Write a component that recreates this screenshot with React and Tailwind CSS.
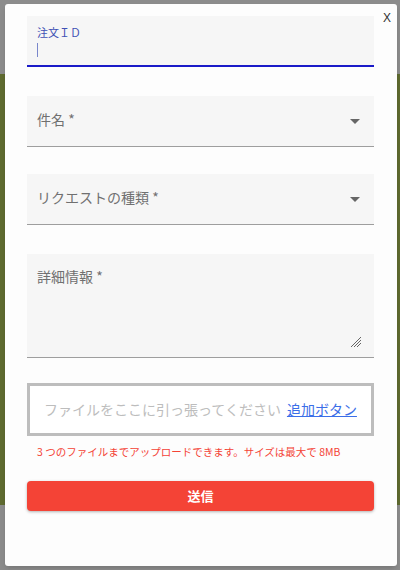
import React from 'react';

const font = { fontFamily: '"Noto Sans CJK JP", "Noto Sans", sans-serif' };

function Arrow() {
  return (
    <svg width="10" height="5" viewBox="0 0 10 5" className="shrink-0">
      <polygon points="0,0 10,0 5,5" fill="#666" />
    </svg>
  );
}

function SelectField({ label }) {
  return (
    <div className="h-[51px] bg-[#f6f6f6] border-b border-[#9e9e9e] pl-[10px] pr-[14px] flex items-center justify-between">
      <span className="text-[14px] text-[#707070] pb-[3px]">{label}</span>
      <Arrow />
    </div>
  );
}

export default function App() {
  return (
    <div className="relative w-[400px] h-[570px] bg-[#8c8c8c] overflow-hidden" style={font}>
      {/* page behind the overlay */}
      <div className="mt-[74px] h-[431px] bg-[#5f6b30]" />

      {/* modal */}
      <div className="absolute left-[5px] top-[4px] w-[392px] h-[562px] bg-[#fdfdfd] rounded-[3px] shadow-md pl-[22px] pr-[23px] pt-[12px]">
        <button className="absolute right-[6px] top-[5px] text-[12px] text-[#333]" style={{ fontFamily: '"Liberation Sans", sans-serif' }}>
          X
        </button>

        <div className="flex flex-col">
          {/* order id (focused) */}
          <div className="h-[51px] bg-[#f6f6f6] border-b-2 border-[#1a1ac8] pl-[10px] pt-[9px] flex flex-col">
            <span className="text-[11px] leading-[14px] text-[#3f51b5]">注文ＩＤ</span>
            <span className="mt-[4px] w-px h-[14px] bg-[#7986cb]" />
          </div>

          <div className="mt-[29px]">
            <SelectField label="件名 *" />
          </div>
          <div className="mt-[27px]">
            <SelectField label="リクエストの種類 *" />
          </div>

          {/* details textarea */}
          <div className="mt-[29px] h-[104px] bg-[#f6f6f6] border-b border-[#9e9e9e] pl-[10px] pt-[13px] pr-[12px] pb-[9px] flex flex-col justify-between">
            <span className="text-[14px] leading-[18px] text-[#707070]">詳細情報 *</span>
            <svg width="12" height="12" viewBox="0 0 12 12" className="self-end">
              <line x1="1" y1="11" x2="11" y2="1" stroke="#666" strokeWidth="1" />
              <line x1="4" y1="11" x2="11" y2="4" stroke="#666" strokeWidth="1" />
              <line x1="7" y1="11" x2="11" y2="7" stroke="#666" strokeWidth="1" />
            </svg>
          </div>

          {/* dropzone */}
          <div className="mt-[25px] h-[53px] border-[3px] border-[#bdbdbd] bg-white flex items-center justify-center text-[14px]">
            <span className="text-[#bdbdbd]">ファイルをここに引っ張ってください</span>
            <a href="#" className="ml-[6px] text-[#3b6ee8] underline">追加ボタン</a>
          </div>
          <p className="mt-[9px] pl-[10px] text-[10.5px] leading-[14px] text-[#f44336]">
            3 つのファイルまでアップロードできます。サイズは最大で 8MB
          </p>

          <button className="mt-[22px] h-[30px] rounded-[4px] bg-[#f44336] text-white text-[13px] font-semibold shadow-[0_1px_3px_rgba(0,0,0,0.3)]">
            送信
          </button>
        </div>
      </div>
    </div>
  );
}
